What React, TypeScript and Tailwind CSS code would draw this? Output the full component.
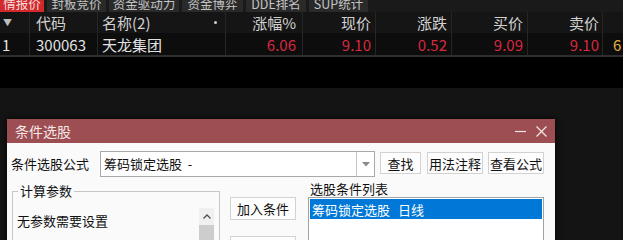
import React from "react";

const tabs = [
  { label: "情报价", w: "w-[44px]", active: true },
  { label: "封板竞价", w: "w-[59px]" },
  { label: "资金驱动力", w: "w-[70px]" },
  { label: "资金博弈", w: "w-[61px]" },
  { label: "DDE排名", w: "w-[60px]" },
  { label: "SUP统计", w: "w-[59px]" },
];

const cell = "border-r border-[#262626] h-full flex items-center";

export default function App() {
  return (
    <div
      className="w-[623px] h-[240px] overflow-hidden flex flex-col bg-[#141414]"
      style={{ fontFamily: '"Noto Sans CJK SC", "Noto Sans", sans-serif' }}
    >
      {/* tab bar */}
      <div className="h-[12px] shrink-0 flex gap-[3px] bg-[#1a1a1a] overflow-hidden">
        {tabs.map((t) => (
          <div
            key={t.label}
            className={`${t.w} h-[12px] overflow-hidden flex justify-center ${
              t.active ? "bg-[#d22a2c] text-[#f4dede]" : "bg-[#2a2a2a] text-[#c4c4c4]"
            }`}
          >
            <div className="-mt-[5px] leading-[17px] text-[12.5px] whitespace-nowrap">{t.label}</div>
          </div>
        ))}
      </div>

      {/* header */}
      <div className="h-[21px] shrink-0 grid grid-cols-[30px_68px_128px_77px_73px_76px_76px_75px_1fr] bg-[#151515] text-[#d2d2d2] text-[15px] leading-none">
        <div className={`${cell} pl-[3px] text-[9px] text-[#bdbdbd]`}>▼</div>
        <div className={`${cell} pl-[6px]`}>代码</div>
        <div className={`${cell} pl-[4px] pr-[8px] justify-between`}>
          <span>名称(2)</span>
          <span className="w-[3px] h-[3px] rounded-full bg-[#d0d0d0]" />
        </div>
        <div className={`${cell} justify-end pr-[6px]`}>涨幅%</div>
        <div className={`${cell} justify-end pr-[4px]`}>现价</div>
        <div className={`${cell} justify-end pr-[4px]`}>涨跌</div>
        <div className={`${cell} justify-end pr-[4px]`}>买价</div>
        <div className={`${cell} justify-end pr-[3px]`}>卖价</div>
        <div className="h-full" />
      </div>

      {/* data row */}
      <div className="h-[22px] shrink-0 grid grid-cols-[30px_68px_128px_77px_73px_76px_76px_75px_1fr] bg-[#0d0d0d] text-[#e2e2e2] text-[15px] leading-none">
        <div className={`${cell} pl-[2px]`}>1</div>
        <div className={`${cell} pl-[6px]`}>300063</div>
        <div className={`${cell} pl-[4px]`}>天龙集团</div>
        <div className={`${cell} justify-end pr-[6px] text-[#d9283f]`}>6.06</div>
        <div className={`${cell} justify-end pr-[4px] text-[#d9283f]`}>9.10</div>
        <div className={`${cell} justify-end pr-[4px] text-[#d9283f]`}>0.52</div>
        <div className={`${cell} justify-end pr-[4px] text-[#d9283f]`}>9.09</div>
        <div className={`${cell} justify-end pr-[3px] text-[#d9283f]`}>9.10</div>
        <div className="h-full flex items-center pl-[10px] text-[#e3ad3e]">6</div>
      </div>

      <div className="h-[2px] shrink-0 bg-[#2e2e2e]" />
      <div className="h-[31px] shrink-0 bg-black" />

      {/* lower area with dialog */}
      <div className="flex-1 pl-[7px] pt-[31px] bg-[#141414]">
        <div className="w-[548px] h-[200px] flex flex-col shadow-[0_0_6px_rgba(0,0,0,0.8)]">
          {/* title bar */}
          <div className="h-[24px] shrink-0 bg-[#9d4e53] flex items-center pl-[8px] pr-[8px] text-[14px] text-[#f6e6e6]">
            <span className="leading-none">条件选股</span>
            <div className="ml-auto flex items-center gap-[10px]">
              <svg width="11" height="11" viewBox="0 0 11 11">
                <line x1="0" y1="5.5" x2="11" y2="5.5" stroke="#f4e4e4" strokeWidth="1.2" />
              </svg>
              <svg width="11" height="11" viewBox="0 0 11 11">
                <line x1="0.5" y1="0.5" x2="10.5" y2="10.5" stroke="#f4e4e4" strokeWidth="1.2" />
                <line x1="10.5" y1="0.5" x2="0.5" y2="10.5" stroke="#f4e4e4" strokeWidth="1.2" />
              </svg>
            </div>
          </div>

          {/* body */}
          <div className="flex-1 bg-[#fafafa] text-[13px] text-[#111] pt-[8px]">
            {/* row 1 */}
            <div className="flex items-start h-[26px]">
              <div className="ml-[4px] w-[89px] leading-[26px] whitespace-nowrap">条件选股公式</div>
              <div className="w-[275px] h-[26px] border border-[#a9a9a9] bg-white flex">
                <div className="flex-1 pl-[3px] leading-[24px] whitespace-pre">筹码锁定选股  -</div>
                <div className="w-[18px] border-l border-[#c4c4c4] flex items-center justify-center">
                  <svg width="8" height="5" viewBox="0 0 8 5">
                    <path d="M0 0 L8 0 L4 4.5 Z" fill="#8a8a8a" />
                  </svg>
                </div>
              </div>
              <div className="ml-[5px] mt-[1px] w-[41px] h-[22px] border border-[#d2d2d2] bg-[#fdfdfd] flex items-center justify-center leading-none">查找</div>
              <div className="ml-[6px] mt-[1px] w-[56px] h-[22px] border border-[#d2d2d2] bg-[#fdfdfd] flex items-center justify-center leading-none whitespace-nowrap">用法注释</div>
              <div className="ml-[5px] mt-[1px] w-[56px] h-[22px] border border-[#d2d2d2] bg-[#fdfdfd] flex items-center justify-center leading-none whitespace-nowrap">查看公式</div>
            </div>

            {/* row 2 */}
            <div className="flex items-start mt-[3px]">
              <fieldset className="ml-[5px] mt-[2px] w-[208px] h-[80px] border border-[#c6c6c6] flex">
                <legend className="ml-[5px] px-[2px] leading-[18px]">计算参数</legend>
                <div className="flex w-full">
                  <div className="flex-1 pl-[4px] pt-[13px] leading-[16px] whitespace-nowrap">无参数需要设置</div>
                  <div className="w-[15px] mr-[5px] mt-[8px] flex flex-col bg-[#f0f0f0]">
                    <div className="h-[17px] flex items-center justify-center">
                      <svg width="8" height="5" viewBox="0 0 8 5">
                        <path d="M0.5 4.5 L4 1 L7.5 4.5" fill="none" stroke="#505050" strokeWidth="1.3" />
                      </svg>
                    </div>
                    <div className="flex-1 bg-[#cdcdcd]" />
                  </div>
                </div>
              </fieldset>

              <div className="ml-[10px] mt-[17px] flex flex-col gap-[16px]">
                <div className="w-[66px] h-[23px] border border-[#d2d2d2] bg-[#fdfdfd] flex items-center justify-center leading-none whitespace-nowrap">加入条件</div>
                <div className="w-[66px] h-[23px] border border-[#d2d2d2] bg-[#fdfdfd]" />
              </div>

              <div className="ml-[12px] w-[236px] flex flex-col">
                <div className="pl-[2px] leading-[17px]">选股条件列表</div>
                <div className="h-[60px] border border-[#a3a3a3] bg-white p-[1px]">
                  <div className="h-[20px] bg-[#0078d7] text-white flex items-center pl-[2px] leading-none whitespace-nowrap">
                    <span>筹码锁定选股</span>
                    <span className="ml-[8px]">日线</span>
                  </div>
                </div>
              </div>
            </div>
          </div>
        </div>
      </div>
    </div>
  );
}
